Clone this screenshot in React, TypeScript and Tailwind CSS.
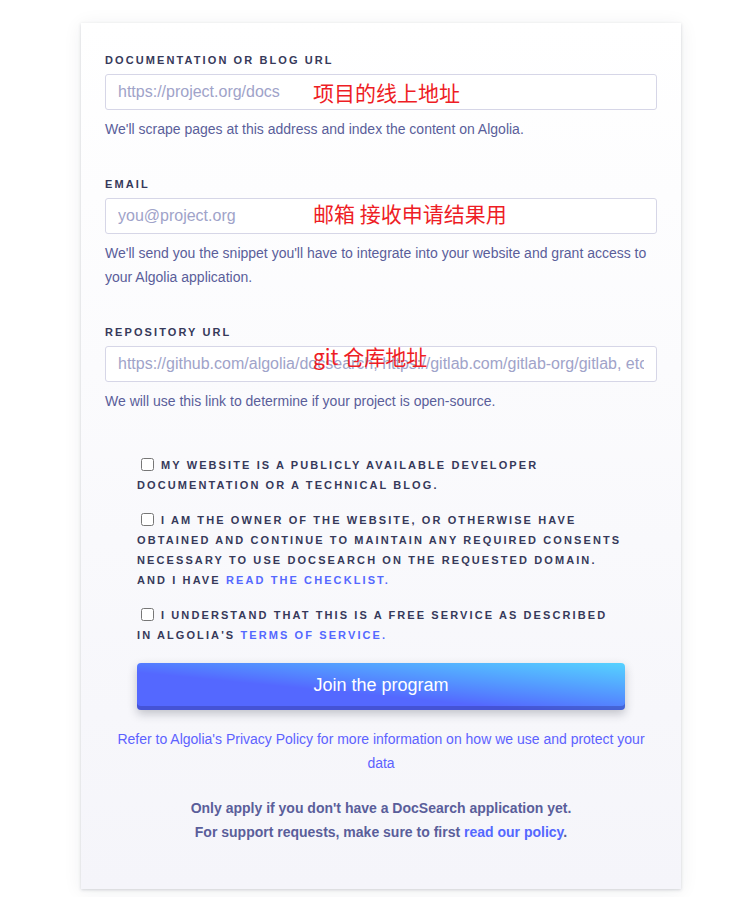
import React from "react";

const font = { fontFamily: '"Liberation Sans", Arial, sans-serif' };

interface FieldProps {
  label: string;
  placeholder: string;
  note: string;
  help: React.ReactNode;
  noteClass: string;
  type?: string;
}

const Field: React.FC<FieldProps> = ({ label, placeholder, note, help, noteClass, type = "text" }) => {
  return (
    <div className="flex flex-col">
      <label className="text-[11px] leading-4 font-bold uppercase tracking-[2.1px] text-[#36395a]">
        {label}
      </label>
      <div className="relative mt-1.5">
        <input
          type={type}
          placeholder={placeholder}
          className="w-full h-9 rounded-[3px] border border-[#d6d6e7] bg-white px-3 text-base text-[#23263b] placeholder:text-[#a0a3c9] outline-none"
        />
        <span
          className={`absolute left-[208px] text-[21px] leading-6 text-[#ee1d25] pointer-events-none ${noteClass}`}
          style={{ fontFamily: '"Noto Sans CJK SC", "Liberation Sans", sans-serif' }}
        >
          {note}
        </span>
      </div>
      <p className="mt-[7px] text-sm leading-6 text-[#5a5e9a]">{help}</p>
    </div>
  );
};

const Check: React.FC<{ children: React.ReactNode }> = ({ children }) => (
  <label className="block text-[11px] leading-5 font-bold uppercase tracking-[2.1px] text-[#36395a]">
    <input type="checkbox" className="ml-1 mr-[7px] align-[-2px] w-[13px] h-[13px]" />
    {children}
  </label>
);

export default function App() {
  return (
    <div className="min-h-screen bg-white pt-[23px] pb-[9px]" style={font}>
      <div className="ml-[81px] w-[600px] bg-gradient-to-b from-white to-[#f5f5fa] shadow-[0_1px_3px_rgba(35,38,59,0.18),0_2px_18px_rgba(35,38,59,0.07)] px-6 pt-[29px] pb-[45px]">
        <div className="flex flex-col gap-[35px]">
          <Field
            label="Documentation or blog URL"
            placeholder="https://project.org/docs"
            note="项目的线上地址"
            noteClass="top-[6px]"
            help="We'll scrape pages at this address and index the content on Algolia."
          />
          <Field
            label="Email"
            type="email"
            placeholder="you@project.org"
            note="邮箱 接收申请结果用"
            noteClass="top-[3px]"
            help="We'll send you the snippet you'll have to integrate into your website and grant access to your Algolia application."
          />
          <Field
            label="Repository URL"
            placeholder="https://github.com/algolia/docsearch, https://gitlab.com/gitlab-org/gitlab, etc"
            note="git 仓库地址"
            noteClass="-top-[2px]"
            help="We will use this link to determine if your project is open-source."
          />
        </div>

        <div className="mx-8 mt-[42px] flex flex-col gap-[15px]">
          <Check>My website is a publicly available developer documentation or a technical blog.</Check>
          <Check>
            I am the owner of the website, or otherwise have obtained and continue to maintain any required
            consents necessary to use DocSearch on the requested domain. And I have{" "}
            <a href="#" className="text-[#5468ff]">
              read the checklist.
            </a>
          </Check>
          <Check>
            I understand that this is a free service as described in Algolia's{" "}
            <a href="#" className="text-[#5468ff]">
              terms of service.
            </a>
          </Check>
        </div>

        <div className="mx-8 mt-[18px]">
          <button
            type="button"
            className="w-full h-[47px] rounded-[4px] bg-gradient-to-tr from-[#5468ff] from-40% to-[#56d2ff] text-white text-lg shadow-[inset_0_-4px_0_rgba(35,38,120,0.3),0_4px_10px_rgba(35,38,59,0.25)] pb-1"
          >
            Join the program
          </button>
        </div>

        <p className="mt-[17px] text-center text-sm leading-6 text-[#5d62ff]">
          Refer to Algolia's Privacy Policy for more information on how we use and protect your data
        </p>

        <div className="mt-[21px] text-center text-sm leading-6 font-bold text-[#5a5e9a]">
          <p>Only apply if you don't have a DocSearch application yet.</p>
          <p>
            For support requests, make sure to first{" "}
            <a href="#" className="text-[#5468ff]">
              read our policy
            </a>
            .
          </p>
        </div>
      </div>
    </div>
  );
}
